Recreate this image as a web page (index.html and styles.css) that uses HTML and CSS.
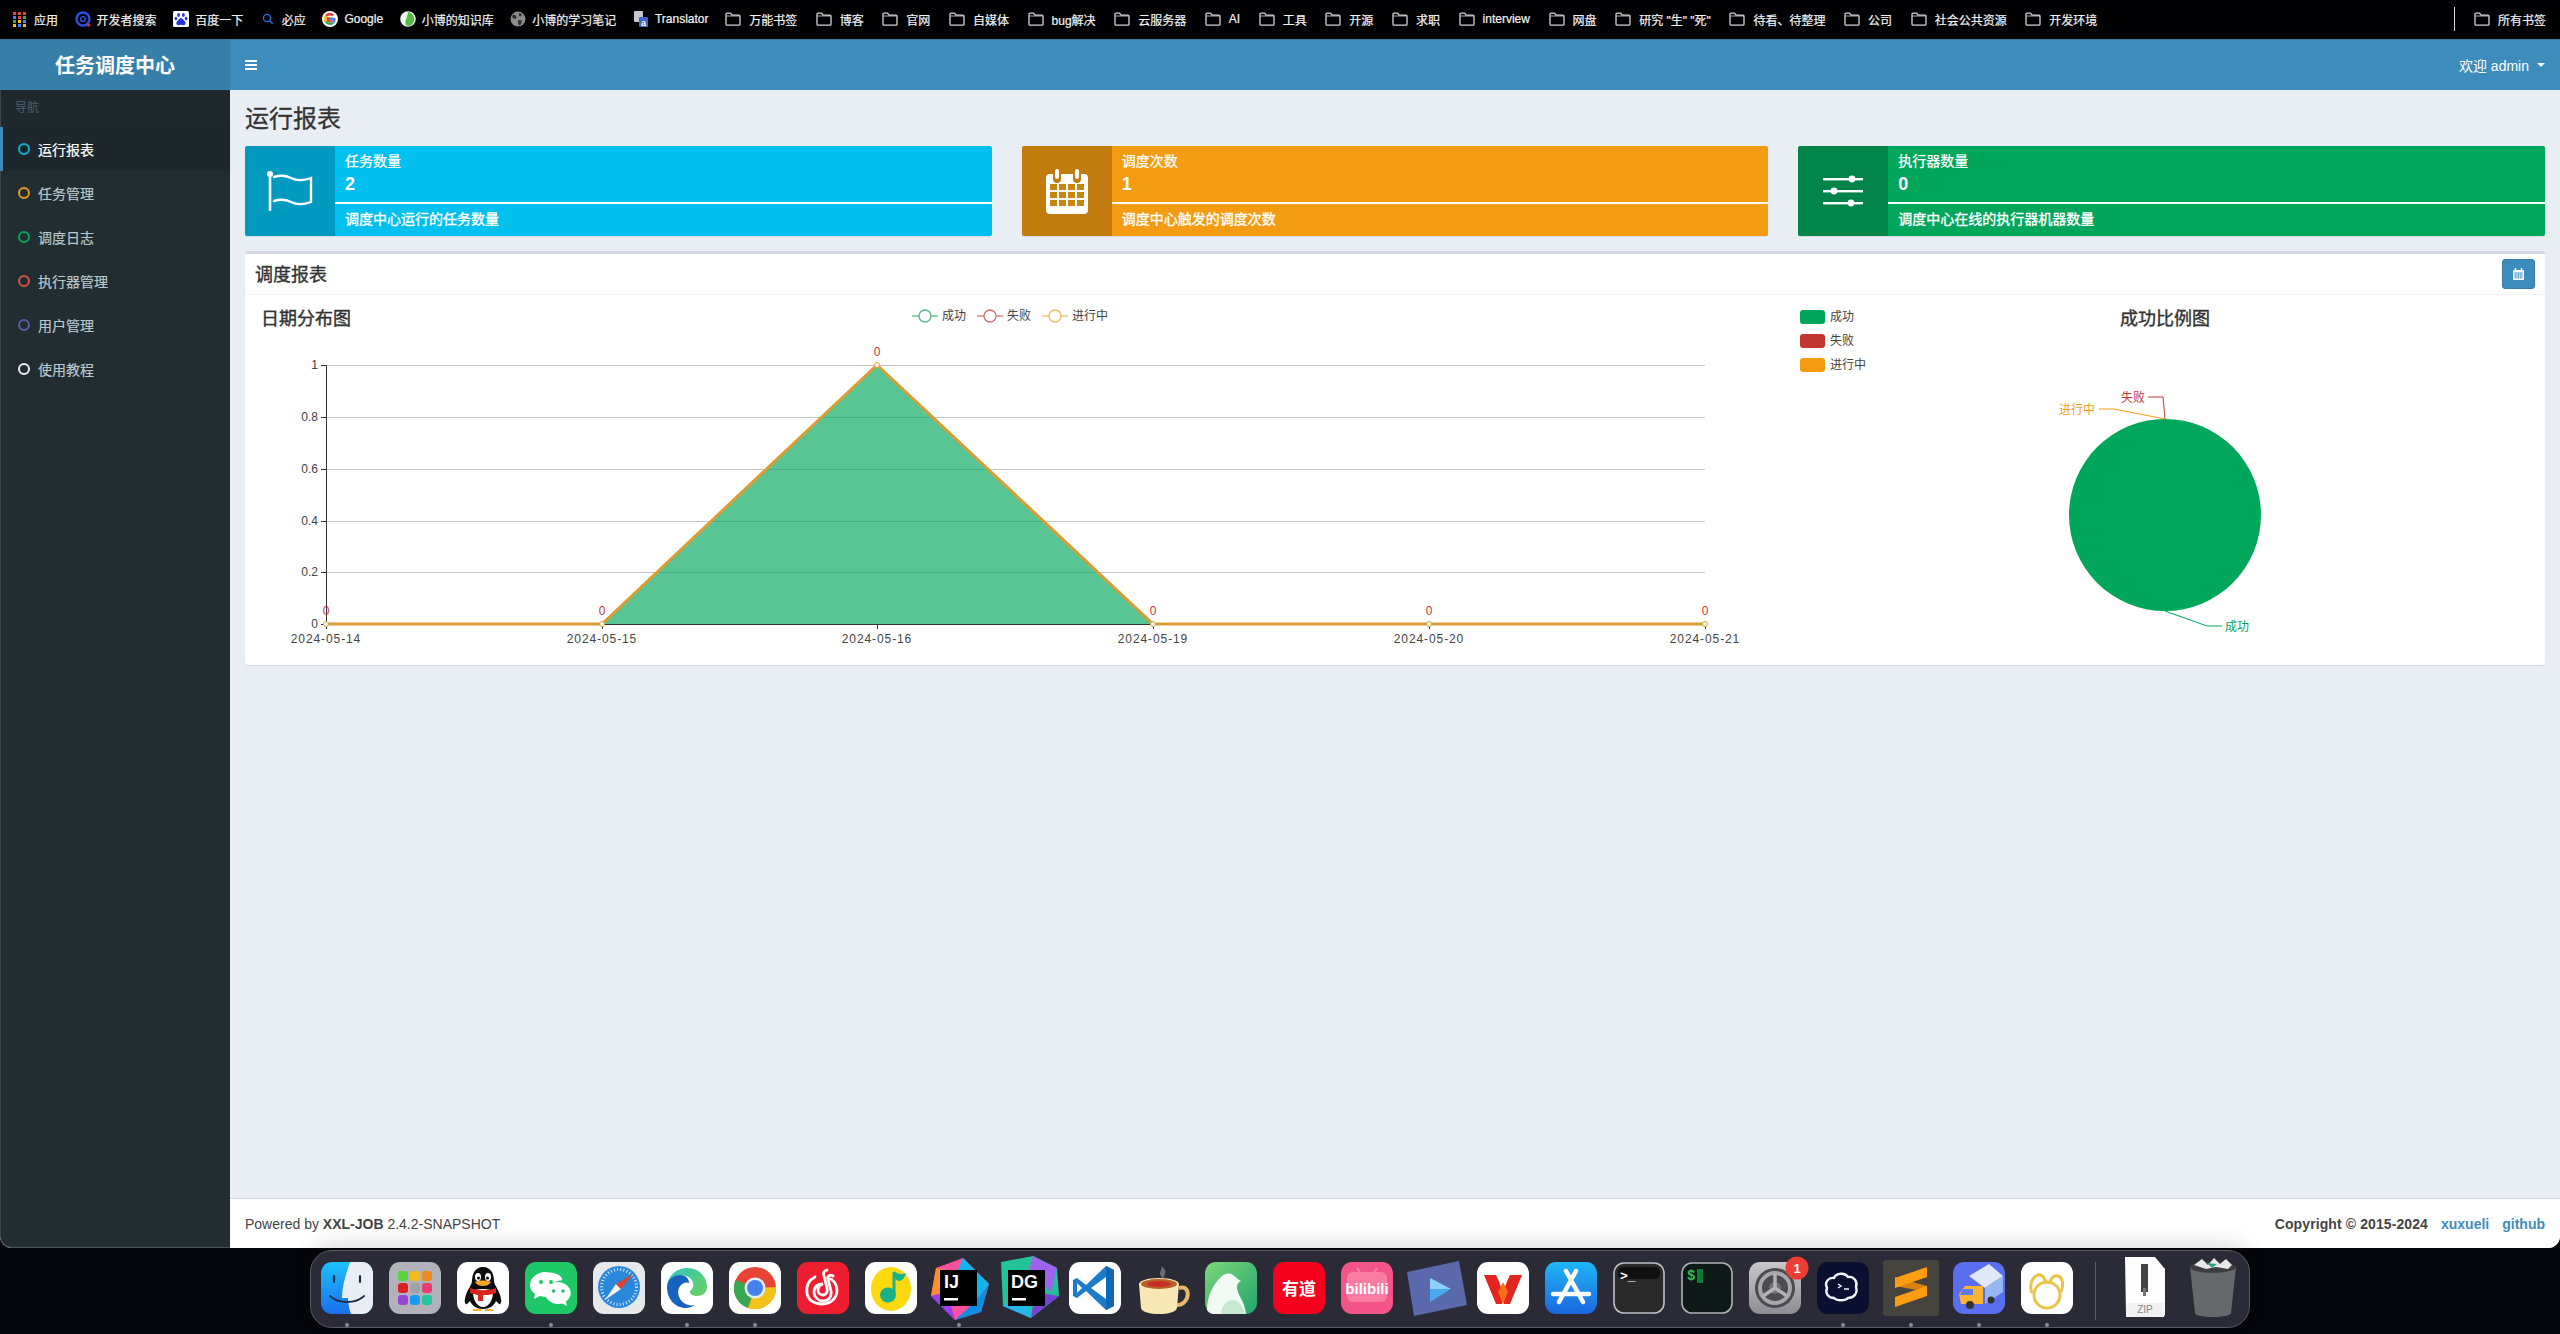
FILE: index.html
```html
<!DOCTYPE html>
<html lang="zh-CN">
<head>
<meta charset="utf-8">
<title>任务调度中心</title>
<link rel="stylesheet" href="styles.css">
</head>
<body>
<svg class="defs" width="0" height="0">
  <symbol id="folder" viewBox="0 0 16 16"><path d="M1 3.2a1 1 0 0 1 1-1h3.6l1.4 2h7a1 1 0 0 1 1 1v8a1 1 0 0 1-1 1H2a1 1 0 0 1-1-1z" fill="none" stroke="#d4d4d4" stroke-width="1.3"/><path d="M1 5h14" stroke="#d4d4d4" stroke-width=".8"/></symbol>
</svg>

<nav class="bookmarks">
  <a class="bm bm-site"><svg class="fav" viewBox="0 0 16 16"><g><rect x="1" y="1" width="3" height="3" fill="#e8453c"/><rect x="6" y="1" width="3" height="3" fill="#e8453c"/><rect x="11" y="1" width="3" height="3" fill="#e8453c"/><rect x="1" y="5" width="3" height="3" fill="#4285f4"/><rect x="6" y="5" width="3" height="3" fill="#ea4335"/><rect x="11" y="5" width="3" height="3" fill="#34a853"/><rect x="1" y="9" width="3" height="3" fill="#34a853"/><rect x="6" y="9" width="3" height="3" fill="#fbbc05"/><rect x="11" y="9" width="3" height="3" fill="#4285f4"/><rect x="1" y="13" width="3" height="3" fill="#fbbc05"/><rect x="6" y="13" width="3" height="3" fill="#4285f4"/><rect x="11" y="13" width="3" height="3" fill="#fbbc05"/></g></svg>应用</a>
  <a class="bm bm-site"><svg class="fav" viewBox="0 0 16 16"><circle cx="8" cy="8" r="6.5" fill="none" stroke="#2b4fe0" stroke-width="2.4"/><circle cx="8" cy="8" r="2.4" fill="none" stroke="#2b4fe0" stroke-width="1.4"/><circle cx="13.5" cy="14" r="1.8" fill="#f0201c"/></svg>开发者搜索</a>
  <a class="bm bm-site"><svg class="fav" viewBox="0 0 16 16"><rect width="16" height="16" rx="1.5" fill="#fff"/><g fill="#2932e1"><ellipse cx="5.6" cy="4" rx="1.4" ry="2"/><ellipse cx="10.4" cy="4" rx="1.4" ry="2"/><ellipse cx="2.9" cy="7.6" rx="1.3" ry="1.8"/><ellipse cx="13.1" cy="7.6" rx="1.3" ry="1.8"/><path d="M8 7c-2 0-2.600 2.500-4 3.600-1.200 1-.6 3.600 1.500 3.600 1 0 1.600-.4 2.500-.4s1.500.4 2.500.4c2.100 0 2.700-2.600 1.500-3.600C10.600 9.500 10 7 8 7z"/></g></svg>百度一下</a>
  <a class="bm bm-site"><svg class="fav" viewBox="0 0 16 16"><circle cx="7" cy="7" r="3.600" fill="none" stroke="#2a6fdb" stroke-width="1.400"/><path d="M9.700 9.700l3 3" stroke="#2a6fdb" stroke-width="1.400"/></svg>必应</a>
  <a class="bm bm-site"><svg class="fav" viewBox="0 0 16 16"><circle cx="8" cy="8" r="8" fill="#fff"/><path d="M13.300 6.800H8v2.500h3.100c-.3 1.400-1.500 2.300-3.100 2.300a3.600 3.600 0 0 1 0-7.200c.9 0 1.700.3 2.300.9l1.800-1.800A6.100 6.100 0 0 0 3 4.300l2 1.600" fill="#ea4335"/><path d="M3 4.300a6 6 0 0 0-.1 7l2.100-1.600a3.600 3.600 0 0 1 0-3.800z" fill="#fbbc05"/><path d="M2.900 11.300A6.100 6.100 0 0 0 8 14.100c1.600 0 3-.5 4.100-1.500l-2-1.600c-.6.400-1.300.6-2.100.6-1.400 0-2.500-.7-3-1.900z" fill="#34a853"/><path d="M12.100 12.600c1.200-1.100 1.900-2.800 1.200-5.800H8v2.500h3.100c-.2.700-.5 1.300-1 1.700z" fill="#4285f4"/></svg>Google</a>
  <a class="bm bm-site"><svg class="fav" viewBox="0 0 16 16"><circle cx="8" cy="8" r="7.800" fill="#f2f6ef"/><path d="M8 1c5 1 7 5 6 9-1 3-3 5-6 5-3-1-3-3-2-6 .5-3 2-5 2-8z" fill="#57b947"/></svg>小博的知识库</a>
  <a class="bm bm-site"><svg class="fav" viewBox="0 0 16 16"><circle cx="8" cy="8" r="7.500" fill="#8c8c8c"/><path d="M3 3.500l3 1 .5 2.500-2 1-2.500-2zM9 2l3 1-1 2.500-2-.5zM8 9l4 .5-1 4-2 1-1-3z" fill="#303030"/></svg>小博的学习笔记</a>
  <a class="bm bm-site"><svg class="fav" viewBox="0 0 16 16"><rect x="1" y="0" width="9" height="11" rx="1" fill="#c4c8d0"/><rect x="6" y="6" width="9" height="10" rx="1" fill="#3f66c9"/><text class="fav-letter" x="8" y="14.500">a</text></svg>Translator</a>
  <a class="bm"><svg class="fav"><use href="#folder"/></svg>万能书签</a>
  <a class="bm"><svg class="fav"><use href="#folder"/></svg>博客</a>
  <a class="bm"><svg class="fav"><use href="#folder"/></svg>官网</a>
  <a class="bm"><svg class="fav"><use href="#folder"/></svg>自媒体</a>
  <a class="bm"><svg class="fav"><use href="#folder"/></svg>bug解决</a>
  <a class="bm"><svg class="fav"><use href="#folder"/></svg>云服务器</a>
  <a class="bm"><svg class="fav"><use href="#folder"/></svg>AI</a>
  <a class="bm"><svg class="fav"><use href="#folder"/></svg>工具</a>
  <a class="bm"><svg class="fav"><use href="#folder"/></svg>开源</a>
  <a class="bm"><svg class="fav"><use href="#folder"/></svg>求职</a>
  <a class="bm"><svg class="fav"><use href="#folder"/></svg>interview</a>
  <a class="bm"><svg class="fav"><use href="#folder"/></svg>网盘</a>
  <a class="bm"><svg class="fav"><use href="#folder"/></svg>研究 "生" "死"</a>
  <a class="bm"><svg class="fav"><use href="#folder"/></svg>待看、待整理</a>
  <a class="bm"><svg class="fav"><use href="#folder"/></svg>公司</a>
  <a class="bm"><svg class="fav"><use href="#folder"/></svg>社会公共资源</a>
  <a class="bm"><svg class="fav"><use href="#folder"/></svg>开发环境</a>
  <span class="bm-sep"></span>
  <a class="bm"><svg class="fav"><use href="#folder"/></svg>所有书签</a>
</nav>

<div class="window">
  <aside class="side">
    <div class="logo">任务调度中心</div>
    <div class="side-head">导航</div>
    <ul class="menu">
      <li class="menu-item active"><i class="ring ring-aqua"></i>运行报表</li>
      <li class="menu-item"><i class="ring ring-yellow"></i>任务管理</li>
      <li class="menu-item"><i class="ring ring-green"></i>调度日志</li>
      <li class="menu-item"><i class="ring ring-red"></i>执行器管理</li>
      <li class="menu-item"><i class="ring ring-purple"></i>用户管理</li>
      <li class="menu-item"><i class="ring ring-white"></i>使用教程</li>
    </ul>
  </aside>
  <div class="main">
    <header class="topbar">
      <span class="burger"><i></i><i></i><i></i></span>
      <span class="user">欢迎 admin<i class="caret"></i></span>
    </header>
    <main class="content">
      <h1 class="page-title">运行报表</h1>
      <section class="cards">
        <article class="card card-aqua">
          <div class="card-icon"><svg width="46" height="40" viewBox="0 0 46 40"><g fill="none" stroke="#fff" stroke-linecap="round"><path d="M3 3v36" stroke-width="2.600"/><path d="M7 6c6-2 11-2 17 1s12 3 20 0v24c-8 3-14 3-20 0s-11-3-17-1" stroke-width="2.400"/></g><circle cx="3" cy="3" r="3" fill="#fff"/></svg></div>
          <div class="card-body">
            <div class="card-label">任务数量</div>
            <div class="card-num">2</div>
            <div class="card-rule"></div>
            <div class="card-desc">调度中心运行的任务数量</div>
          </div>
        </article>
        <article class="card card-yellow">
          <div class="card-icon"><svg width="42" height="46" viewBox="0 0 42 46"><path d="M4 6h3v5a4 4 0 0 0 8 0V6h12v5a4 4 0 0 0 8 0V6h3a4 4 0 0 1 4 4v32a4 4 0 0 1-4 4H4a4 4 0 0 1-4-4V10a4 4 0 0 1 4-4z" fill="#fff"/><path d="M9 9V3a2 2 0 0 1 4 0v6a2 2 0 0 1-4 0zM29 9V3a2 2 0 0 1 4 0v6a2 2 0 0 1-4 0z" fill="#fff"/><g fill="#c8850f"><rect x="4" y="16" width="7" height="6"/><rect x="13" y="16" width="7" height="6"/><rect x="22" y="16" width="7" height="6"/><rect x="31" y="16" width="7" height="6"/><rect x="4" y="24" width="7" height="6"/><rect x="13" y="24" width="7" height="6"/><rect x="22" y="24" width="7" height="6"/><rect x="31" y="24" width="7" height="6"/><rect x="4" y="32" width="7" height="6"/><rect x="13" y="32" width="7" height="6"/><rect x="22" y="32" width="7" height="6"/><rect x="31" y="32" width="7" height="6"/></g></svg></div>
          <div class="card-body">
            <div class="card-label">调度次数</div>
            <div class="card-num">1</div>
            <div class="card-rule"></div>
            <div class="card-desc">调度中心触发的调度次数</div>
          </div>
        </article>
        <article class="card card-green">
          <div class="card-icon"><svg width="40" height="32" viewBox="0 0 40 32"><g fill="#fff"><rect y="3" width="40" height="2.400"/><rect y="15" width="40" height="2.400"/><rect y="27" width="40" height="2.400"/><circle cx="29" cy="4" r="3.400"/><circle cx="11" cy="16" r="3.400"/><circle cx="28" cy="28" r="3.400"/></g></svg></div>
          <div class="card-body">
            <div class="card-label">执行器数量</div>
            <div class="card-num">0</div>
            <div class="card-rule"></div>
            <div class="card-desc">调度中心在线的执行器机器数量</div>
          </div>
        </article>
      </section>
      <section class="box">
        <div class="box-head">
          <h2 class="box-title">调度报表</h2>
          <button class="cal-btn"><svg width="11" height="12" viewBox="0 0 11 12"><path d="M1 2h9a1 1 0 0 1 1 1v8a1 1 0 0 1-1 1H1a1 1 0 0 1-1-1V3a1 1 0 0 1 1-1z" fill="#fff"/><path d="M2.500 0v2M8.500 0v2" stroke="#fff" stroke-width="1.500"/><path d="M1 5h9M1 7h9M1 9h9M3 4.500V11M5.500 4.500V11M8 4.500V11" stroke="#3c8dbc" stroke-width=".7"/></svg></button>
        </div>
        <div class="box-body">
          <svg class="chart chart-line" viewBox="245 295 1545 370" width="1545" height="370">
            <text class="c-title" x="261" y="325">日期分布图</text>
            <g class="legend-line">
              <path d="M912 316h26" stroke="#4fbb8c"/><circle cx="925" cy="316" r="6" fill="#fff" stroke="#4fbb8c"/>
              <path d="M977 316h26" stroke="#d3706d"/><circle cx="990" cy="316" r="6" fill="#fff" stroke="#d3706d"/>
              <path d="M1042 316h26" stroke="#f0bb60"/><circle cx="1055" cy="316" r="6" fill="#fff" stroke="#f0bb60"/>
            </g>
            <text class="c-small" x="942" y="320">成功</text>
            <text class="c-small" x="1007" y="320">失败</text>
            <text class="c-small" x="1072" y="320">进行中</text>
            <g class="grid-lines">
              <path d="M326 365.500H1705M326 417.500H1705M326 469.500H1705M326 521.500H1705M326 572.500H1705"/>
            </g>
            <polygon class="area" points="602,624 877,365 1153,624"/>
            <path class="axis" d="M326.500 365V624.500H1705M321 365.500h5M321 417.500h5M321 469.500h5M321 521.500h5M321 572.500h5M321 624.500h5M326.500 624v5M602.500 624v5M877.500 624v5M1153.500 624v5M1429.500 624v5M1705.500 624v5"/>
            <path class="series" d="M326 624L602 624L877 365L1153 624L1705 624"/>
            <g class="dots">
              <circle cx="326" cy="624" r="2.500"/><circle cx="602" cy="624" r="2.500"/><circle cx="877" cy="365" r="2.500"/><circle cx="1153" cy="624" r="2.500"/><circle cx="1429" cy="624" r="2.500"/><circle cx="1705" cy="624" r="2.500"/>
            </g>
            <g class="y-labels">
              <text x="318" y="369">1</text><text x="318" y="421">0.8</text><text x="318" y="473">0.6</text><text x="318" y="525">0.4</text><text x="318" y="576">0.2</text><text x="318" y="628">0</text>
            </g>
            <g class="x-labels">
              <text x="326" y="643">2024-05-14</text><text x="602" y="643">2024-05-15</text><text x="877" y="643">2024-05-16</text><text x="1153" y="643">2024-05-19</text><text x="1429" y="643">2024-05-20</text><text x="1705" y="643">2024-05-21</text>
            </g>
            <g class="v-labels">
              <text x="326" y="615">0</text><text x="602" y="615">0</text><text x="877" y="356">0</text><text x="1153" y="615">0</text><text x="1429" y="615">0</text><text x="1705" y="615">0</text>
            </g>
          </svg>
          <svg class="chart chart-pie" viewBox="1790 295 755 370" width="755" height="370">
            <rect x="1800" y="310" width="25" height="14" rx="3" fill="#00a65a"/>
            <rect x="1800" y="334" width="25" height="14" rx="3" fill="#c23632"/>
            <rect x="1800" y="358" width="25" height="14" rx="3" fill="#f39c12"/>
            <text class="c-small" x="1830" y="321">成功</text>
            <text class="c-small" x="1830" y="345">失败</text>
            <text class="c-small" x="1830" y="369">进行中</text>
            <text class="c-title c-center" x="2165" y="325">成功比例图</text>
            <circle cx="2165" cy="515" r="96" fill="#00a65a"/>
            <path class="lead" d="M2165 419L2163 397H2148" stroke="#c23632"/>
            <path class="lead" d="M2165 419L2114 409H2099" stroke="#f39c12"/>
            <path class="lead" d="M2165 611L2207 626H2222" stroke="#00a65a"/>
            <text class="c-small t-red" x="2121" y="402">失败</text>
            <text class="c-small t-orange" x="2059" y="414">进行中</text>
            <text class="c-small t-green" x="2225" y="631">成功</text>
          </svg>
        </div>
      </section>
    </main>
    <footer class="foot">
      <span>Powered by <b>XXL-JOB</b> 2.4.2-SNAPSHOT</span>
      <span class="foot-r"><b>Copyright © 2015-2024</b><a class="foot-link">xuxueli</a><a class="foot-link">github</a></span>
    </footer>
  </div>
</div>

<div class="dock">
  <div class="app on"><svg viewBox="0 0 52 52"><defs><linearGradient id="fb" x1="0" y1="0" x2="0" y2="1"><stop offset="0" stop-color="#1cc0fb"/><stop offset="1" stop-color="#1c6fee"/></linearGradient></defs><rect width="52" height="52" rx="11" fill="url(#fb)"/><path d="M29 0h12a11 11 0 0 1 11 11v30a11 11 0 0 1-11 11H30c-2-6-3-11-3-16h-6c0-12 4-24 8-36z" fill="#e9eef4"/><path d="M13 14v6M39 14v6" stroke="#20304a" stroke-width="2.200" stroke-linecap="round"/><path d="M9 34c8 8 26 8 34 0" fill="none" stroke="#20304a" stroke-width="1.800" stroke-linecap="round"/></svg></div>
  <div class="app"><svg viewBox="0 0 52 52"><rect width="52" height="52" rx="11" fill="#b2b2ba"/><g><rect x="9" y="9" width="10" height="10" rx="3" fill="#5fd13f"/><rect x="21" y="9" width="10" height="10" rx="3" fill="#f6bb14"/><rect x="33" y="9" width="10" height="10" rx="3" fill="#ee8a1e"/><rect x="9" y="21" width="10" height="10" rx="3" fill="#dd1f22"/><rect x="21" y="21" width="10" height="10" rx="3" fill="#9ea3a7"/><rect x="33" y="21" width="10" height="10" rx="3" fill="#ea3e73"/><rect x="9" y="33" width="10" height="10" rx="3" fill="#9a45d6"/><rect x="21" y="33" width="10" height="10" rx="3" fill="#1a9af0"/><rect x="33" y="33" width="10" height="10" rx="3" fill="#25c49a"/></g></svg></div>
  <div class="app"><svg viewBox="0 0 52 52"><rect width="52" height="52" rx="11" fill="#fff"/><path d="M26 5c-8 0-11 7-11 14 0 4-6 10-7 18-1 4 1 6 2 5l3-3c2 5 7 8 13 8s11-3 13-8l3 3c1 1 3-1 2-5-1-8-7-14-7-18 0-7-3-14-11-14z" fill="#0d0d0d"/><path d="M16 30c0 8 4 15 10 15s10-7 10-15c0-4-20-4-20 0z" fill="#fff"/><ellipse cx="21" cy="15" rx="3" ry="4" fill="#fff"/><ellipse cx="31" cy="15" rx="3" ry="4" fill="#fff"/><circle cx="21.500" cy="16" r="1.500"/><circle cx="30.500" cy="16" r="1.500"/><path d="M18 20c4-2 12-2 16 0-2 3-5 4-8 4s-6-1-8-4z" fill="#f5a623"/><path d="M13 26c8 3 18 3 26 0v5c-6 2-8 2-12 2l-1 1v5h-5v-6c-3-1-6-1-8-2z" fill="#d9231f"/><path d="M17 47h7v2h-9zM28 47h7l2 2h-9z" fill="#f5b31e"/></svg></div>
  <div class="app on"><svg viewBox="0 0 52 52"><rect width="52" height="52" rx="11" fill="#1ec866"/><path d="M21 10C12 10 5 16 5 23c0 4 2 7 5 9l-1 5 6-3c2 .5 4 1 6 1 1 0 2 0 3-.3-.5-1.500-.7-3-.7-4.500 0-7 6-12 14-12 0-5-7-8-16-8z" fill="#fff"/><path d="M33 20c-7 0-13 5-13 11s6 11 13 11c1.500 0 3-.3 4-.6l5 2.600-1-4.500c3-2 4.800-5 4.800-8.500 0-6-6-11-12.800-11z" fill="#fff"/><circle cx="16" cy="20" r="2" fill="#1ec866"/><circle cx="26" cy="20" r="2" fill="#1ec866"/><circle cx="28.500" cy="29" r="1.800" fill="#1ec866"/><circle cx="38" cy="29" r="1.800" fill="#1ec866"/></svg></div>
  <div class="app"><svg viewBox="0 0 52 52"><rect width="52" height="52" rx="11" fill="#e7e8ea"/><circle cx="26" cy="25" r="21" fill="#2a88dc"/><circle cx="26" cy="25" r="17.500" fill="none" stroke="#d6ecfb" stroke-width="3" stroke-dasharray="1 2.200"/><path d="M12 38l11-16 5 5z" fill="#f4f4f4"/><path d="M40 12L23 22l5 5z" fill="#e2402f"/></svg></div>
  <div class="app on"><svg viewBox="0 0 52 52"><defs><linearGradient id="eg" x1="0" y1="0" x2="1" y2="1"><stop offset="0" stop-color="#2fc5c2"/><stop offset="1" stop-color="#6bd35b"/></linearGradient></defs><rect width="52" height="52" rx="11" fill="#fff"/><path d="M6 25C7 13 16 6 26 6c12 0 20 9 20 19 0 5-4 9-10 9-4 0-7-2-7-4 0-1 1-2 2-3 3-4 1-11-6-13C15 12 7 17 6 25z" fill="url(#eg)"/><path d="M6 25c0-8 7-12 13-12 6 0 9 4 9 8-2-1-5-1-8 2-5 5-3 14 3 18 3 2 7 3 11 2-3 2-6 3-9 3C14 46 6 37 6 25z" fill="#1763bf"/></svg></div>
  <div class="app on"><svg viewBox="0 0 52 52"><rect width="52" height="52" rx="11" fill="#fff"/><circle cx="26" cy="26" r="21" fill="#e84335"/><path d="M26 26L6.500 18A21 21 0 0 0 19 46z" fill="#38a853"/><path d="M26 26l21-1A21 21 0 0 1 19 46z" fill="#f5c21a"/><circle cx="26" cy="26" r="10.500" fill="#e7eefb"/><circle cx="26" cy="26" r="8" fill="#4381ee"/></svg></div>
  <div class="app"><svg viewBox="0 0 52 52"><rect width="52" height="52" rx="11" fill="#ee1d2f"/><path d="M30 8c-3 1-4 3-3 6l3 12c1 4-1 7-4 7s-5-2-5-5 2-5 5-6c-6 0-9 3-9 8 0 5 4 9 9 9 6 0 9-5 8-10l-3-12c-1-3 2-5 5-3" fill="none" stroke="#fff" stroke-width="2.800" stroke-linecap="round"/><path d="M18 15c-6 3-9 9-8 16 1 7 7 11 15 11 9 0 15-6 15-14 0-6-4-11-9-12" fill="none" stroke="#fff" stroke-width="2.800" stroke-linecap="round"/></svg></div>
  <div class="app"><svg viewBox="0 0 52 52"><rect width="52" height="52" rx="11" fill="#fff"/><ellipse cx="26" cy="27" rx="20" ry="22" fill="#fcd90f"/><path d="M29 10v22" stroke="#1ab188" stroke-width="3"/><ellipse cx="23" cy="33" rx="8" ry="7.500" fill="#1ab188"/><path d="M29 9c3 3 9 4 12 2-1 4-3 7-6 8-3 0-5-2-6-4z" fill="#1ab188"/></svg></div>
  <div class="app on"><svg viewBox="0 0 52 52"><polygon points="3,6 30,-4 56,22 48,50 22,58 -2,34" fill="#fc4f9e"/><polygon points="30,-4 56,22 42,40 24,10" fill="#13b4ee"/><polygon points="3,6 20,10 14,30 -2,34" fill="#fd8f2f"/><polygon points="42,40 56,22 48,50 22,58" fill="#0f8de0"/><polygon points="-2,34 14,30 22,58" fill="#9a3ff0"/><rect x="7" y="8" width="37" height="36" fill="#000"/><text class="ide-t" x="11" y="26">IJ</text><rect x="11" y="36" width="14" height="2.500" fill="#fff"/></svg></div>
  <div class="app"><svg viewBox="0 0 52 52"><polygon points="0,0 32,-6 56,6 58,34 30,56 2,44" fill="#22c29a"/><polygon points="32,-6 56,6 50,30 28,8" fill="#9e63ee"/><polygon points="2,44 30,56 24,30" fill="#25b6ee"/><polygon points="30,56 58,34 34,30" fill="#7a41d8"/><rect x="7" y="8" width="37" height="36" fill="#000"/><text class="ide-t" x="10" y="26">DG</text><rect x="11" y="36" width="14" height="2.500" fill="#fff"/></svg></div>
  <div class="app"><svg viewBox="0 0 52 52"><rect width="52" height="52" rx="11" fill="#fff"/><path d="M37 4l8 4v36l-8 4L17 29l-9 7-4-2V18l4-2 9 7z" fill="#1c7ccb"/><path d="M37 4l8 4v36l-8 4z" fill="#0f68b5"/><path d="M37 15v22L22 26z" fill="#fff"/><path d="M8 21v10l5-5z" fill="#fff"/></svg></div>
  <div class="app"><svg viewBox="0 0 52 52"><path d="M24 14c-3-4 2-6 0-10 4 2 6 6 3 10 0 0 0 2-1 3z" fill="#6b6b6b"/><path d="M2 22c0-3 8-6 20-6s20 3 20 6l-2 24c-1 4-9 6-18 6S5 50 4 46z" fill="#f8e6b4"/><ellipse cx="22" cy="22" rx="18" ry="5" fill="#b5622a"/><ellipse cx="22" cy="22" rx="12" ry="3" fill="#c92b26"/><path d="M42 26c8-2 10 4 8 10-2 5-6 7-10 7" fill="none" stroke="#e8b866" stroke-width="4"/></svg></div>
  <div class="app"><svg viewBox="0 0 52 52"><defs><linearGradient id="yq" x1="0" y1="0" x2="1" y2="1"><stop offset="0" stop-color="#7bd67a"/><stop offset="1" stop-color="#21a56b"/></linearGradient></defs><rect width="52" height="52" rx="11" fill="url(#yq)"/><path d="M2 48c0-14 6-25 13-32 3-4 9-6 13-3 3 2 4 4 8 6-3 2-4 3-4 6 0 8 8 14 9 27H8a8 8 0 0 1-6-4z" fill="#f2faf4"/><path d="M16 52c0-8 6-14 12-14 6 0 10 8 12 14z" fill="#c5e8d0"/></svg></div>
  <div class="app"><svg viewBox="0 0 52 52"><rect width="52" height="52" rx="11" fill="#f5001d"/><text class="yd-t" x="26" y="33">有道</text></svg></div>
  <div class="app"><svg viewBox="0 0 52 52"><rect width="52" height="52" rx="11" fill="#f3558b"/><path d="M19 10l-3-4M33 10l3-4" stroke="#fa86ac" stroke-width="2"/><rect x="6" y="10" width="40" height="30" rx="6" fill="#fa7ca3"/><text class="bili-t" x="26" y="32">bilibili</text></svg></div>
  <div class="app"><svg viewBox="0 0 52 52"><polygon points="-2,10 50,-1 58,43 5,54" fill="#5a69ac"/><polygon points="21,16 42,27 21,40" fill="#4aa8f0"/><polygon points="21,16 42,27 21,27" fill="#8dd0fa"/></svg></div>
  <div class="app"><svg viewBox="0 0 52 52"><rect width="52" height="52" rx="11" fill="#fff"/><path d="M7 13h13l6 18 6-18h13L33 42h-6l-1-3-1 3h-6z" fill="#e5231f"/><path d="M19 13h14l-7 15z" fill="#fff"/><path d="M21 30l5-10 5 10-5 12z" fill="#f8711a"/></svg></div>
  <div class="app"><svg viewBox="0 0 52 52"><defs><linearGradient id="as" x1="0" y1="0" x2="0" y2="1"><stop offset="0" stop-color="#1fb6f6"/><stop offset="1" stop-color="#1b66e0"/></linearGradient></defs><rect width="52" height="52" rx="11" fill="url(#as)"/><path d="M31 9L14 40M21 9l17 31M8 32h36" stroke="#fff" stroke-width="4.500" stroke-linecap="round" fill="none"/></svg></div>
  <div class="app"><svg viewBox="0 0 52 52"><rect x="1" y="1" width="50" height="50" rx="10" fill="#2a2a2a" stroke="#bfbfc5" stroke-width="1.600"/><rect x="5" y="5" width="42" height="12" rx="5" fill="#101010"/><text class="term-t" x="7" y="18">&gt;_</text></svg></div>
  <div class="app"><svg viewBox="0 0 52 52"><rect x="1" y="1" width="50" height="50" rx="10" fill="#0f1a18" stroke="#aeb4b6" stroke-width="1.600"/><text class="iterm-t" x="6" y="18">$</text><rect x="16" y="7" width="6" height="14" fill="#0f7a36"/></svg></div>
  <div class="app"><svg viewBox="0 0 52 52"><defs><linearGradient id="sg" x1="0" y1="0" x2="0" y2="1"><stop offset="0" stop-color="#c8c8cc"/><stop offset="1" stop-color="#8c8c92"/></linearGradient></defs><rect width="52" height="52" rx="11" fill="url(#sg)"/><circle cx="26" cy="26" r="20" fill="#4b4b50"/><circle cx="26" cy="26" r="15" fill="none" stroke="#a8a8ac" stroke-width="4"/><circle cx="26" cy="26" r="6" fill="#707075"/><path d="M26 12v14M26 26l-12 8M26 26l12 8" stroke="#b4b4b8" stroke-width="3.500"/><circle class="badge-dot" cx="48" cy="6" r="11.500"/><text class="badge-t" x="48" y="10.500">1</text></svg></div>
  <div class="app on"><svg viewBox="0 0 52 52"><rect width="52" height="52" rx="11" fill="#0b1030"/><path d="M17 36c-6 0-9-5-7-10-3-6 2-11 7-10 2-5 11-6 14-1 6-1 10 5 8 10 2 6-2 11-8 11-3 3-11 3-14 0z" fill="none" stroke="#f2f4fb" stroke-width="2.400"/><path d="M21 22l3 2-3 2M27 27h5" stroke="#f2f4fb" stroke-width="1.500" fill="none"/></svg></div>
  <div class="app on"><svg viewBox="0 0 52 52"><rect x="-2" y="-2" width="56" height="56" rx="3" fill="#45443e"/><polygon points="10,15 42,24 42,30 10,24" fill="#d8820a"/><polygon points="10,16 42,5 42,15 10,26" fill="#ff9d12"/><polygon points="42,24 42,34 10,45 10,35" fill="#ff9d12"/></svg></div>
  <div class="app on"><svg viewBox="0 0 52 52"><rect width="52" height="52" rx="11" fill="#5a6ff0"/><polygon points="16,14 36,2 50,14 32,26" fill="#dfe9fa"/><polygon points="32,26 50,14 50,30 32,42" fill="#98b6ef"/><polygon points="12,24 30,24 30,42 8,42 6,32" fill="#f8b432"/><polygon points="10,27 20,27 20,33 7,33" fill="#5d7ae8"/><circle cx="17" cy="43" r="4" fill="#333"/><circle cx="38" cy="38" r="3.500" fill="#333"/></svg></div>
  <div class="app on"><svg viewBox="0 0 52 52"><rect width="52" height="52" rx="11" fill="#fff"/><g fill="none" stroke="#e8c547" stroke-width="3"><circle cx="26" cy="33" r="13"/><path d="M11 31c-3-8 0-16 6-18 5-1 7 4 8 9"/><path d="M28 22c2-6 5-9 9-8 5 2 6 9 3 16"/></g></svg></div>
  <span class="dock-sep"></span>
  <div class="app app-zip"><svg viewBox="0 0 52 60"><path d="M6 0h30l10 12v46l-2 2H8l-1-2z" fill="#fdfdfd"/><rect x="7" y="46" width="38" height="14" fill="#f2f2f2"/><rect x="22" y="7" width="7" height="28" fill="#444"/><rect x="24" y="31" width="3" height="8" fill="#777"/><text class="zip-t" x="26" y="56">ZIP</text></svg></div>
  <div class="app app-trash"><svg viewBox="0 0 52 60"><path d="M3 10h46l-5 46c0 2-7 4-18 4s-18-2-18-4z" fill="#66686b"/><ellipse cx="26" cy="10" rx="23" ry="6" fill="#3c3d40"/><path d="M7 8l8-6 6 6 6-7 6 6 6-5 6 6-4 4-12-2-10 2z" fill="#e8e8e8"/><path d="M20 6l5 5 5-4z" fill="#30a080"/></svg></div>
</div>
</body>
</html>
```

FILE: styles.css
```css
* { box-sizing: border-box; }
html, body { margin: 0; padding: 0; }
body {
  width: 2560px;
  height: 1334px;
  overflow: hidden;
  display: flex;
  flex-direction: column;
  background: #05050c;
  font-family: "Liberation Sans", "Noto Sans CJK SC", sans-serif;
  color: #333;
}
.defs { position: absolute; }

/* bookmarks */
.bookmarks {
  height: 39px;
  flex: none;
  display: flex;
  align-items: center;
  gap: 18.600px;
  padding: 0 0 1px 12px;
  background: #010103;
  color: #f2f2f2;
  font: 12px "Liberation Sans", "Noto Sans CJK SC", sans-serif;
  -webkit-text-stroke: .2px #f2f2f2;
}
.bm { display: flex; align-items: center; white-space: nowrap; }
.fav { width: 16px; height: 16px; margin-right: 8px; flex: none; overflow: visible; }
.bm-site { margin-right: -2px; }
.bm-site .fav { margin-right: 6px; }
.fav-letter { font: bold 9px "Liberation Sans", sans-serif; fill: #fff; }
.bm-sep { width: 1px; height: 24px; background: #d8d8d8; margin-left: auto; }
.bm:last-child { margin-right: 14px; }

/* window */
.window {
  height: 1209px;
  flex: none;
  display: flex;
  border-radius: 0 0 12px 12px;
  overflow: hidden;
  background: #ecf0f5;
}
.side {
  width: 230px;
  flex: none;
  display: flex;
  flex-direction: column;
  background: #222d32;
  border-left: 1px solid #3b4347;
  border-bottom: 1px solid #4a5256;
  border-radius: 0 0 0 12px;
}
.logo {
  height: 51px;
  flex: none;
  margin-left: -1px;
  background: #367fa9;
  border-top: 1px solid #3f7396;
  color: #fff;
  font-size: 20px;
  font-weight: 700;
  line-height: 52px;
  text-align: center;
}
.side-head {
  height: 37px;
  padding: 7px 14px 0;
  background: #1f282d;
  color: #4b646f;
  font-size: 12px;
  line-height: 22px;
}
.menu { list-style: none; margin: 0; padding: 0; }
.menu-item {
  height: 44px;
  display: flex;
  align-items: center;
  padding-left: 17px;
  padding-bottom: 1px;
  color: #b8c7ce;
  font-size: 14px;
  border-left: 3px solid transparent;
  margin-left: -1px;
  -webkit-text-stroke: .2px;
}
.menu-item.active { background: #1e282c; color: #fff; border-left-color: #3c8dbc; }
.ring {
  width: 12px;
  height: 12px;
  margin-right: 8px;
  margin-left: -2px;
  border-radius: 50%;
  border: 2px solid currentColor;
}
.ring-aqua { color: #0fb1d8; }
.ring-yellow { color: #e8991f; }
.ring-green { color: #00a65a; }
.ring-red { color: #d9503f; }
.ring-purple { color: #5a5aa8; }
.ring-white { color: #e8ecee; }

.main { flex: 1; display: flex; flex-direction: column; min-width: 0; }
.topbar {
  height: 51px;
  flex: none;
  display: flex;
  align-items: center;
  justify-content: space-between;
  padding: 0 15px;
  background: #3c8dbc;
  border-top: 1px solid #3f7ba0;
  color: #fff;
}
.burger { display: flex; flex-direction: column; gap: 2px; }
.burger i { display: block; width: 12px; height: 2px; background: #fff; }
.user { display: flex; align-items: center; font-size: 14px; }
.caret {
  margin-left: 8px;
  border-top: 4px solid #fff;
  border-left: 4px solid transparent;
  border-right: 4px solid transparent;
}

.content { flex: 1; padding: 0 15px; background: #e9eef5; }
.page-title {
  margin: 0;
  height: 56px;
  font-size: 24px;
  font-weight: 400;
  line-height: 57px;
  color: #333;
  -webkit-text-stroke: .3px #333;
}
.cards { display: grid; grid-template-columns: repeat(3, 1fr); gap: 30px; }
.card {
  height: 90px;
  display: flex;
  border-radius: 2px;
  overflow: hidden;
  color: #fff;
  box-shadow: 0 1px 1px rgba(0, 0, 0, .08);
}
.card-aqua { background: #00c0ef; }
.card-yellow { background: #f39c12; }
.card-green { background: #00a65a; }
.card-icon {
  width: 90px;
  flex: none;
  display: flex;
  align-items: center;
  justify-content: center;
  background: rgba(0, 0, 0, .2);
}
.card-body { flex: 1; display: flex; flex-direction: column; }
.card-label { height: 25px; padding: 6px 10px 0; font-size: 14px; line-height: 18px; -webkit-text-stroke: .25px #fff; }
.card-num { height: 31px; padding: 0 10px; font-size: 18px; font-weight: 700; line-height: 26px; }
.card-rule { height: 2px; background: #fff; flex: none; }
.card-desc { padding: 5px 10px 0; font-size: 14px; line-height: 20px; -webkit-text-stroke: .35px #fff; }

.box {
  margin-top: 15px;
  height: 414px;
  background: #fff;
  border-top: 3px solid #d2d6de;
  border-radius: 3px;
  box-shadow: 0 1px 1px rgba(0, 0, 0, .1);
}
.box-head {
  height: 41px;
  display: flex;
  align-items: center;
  justify-content: space-between;
  padding: 0 10px;
  border-bottom: 1px solid #f4f4f4;
}
.box-title { margin: -3px 0 0; font-size: 18px; font-weight: 400; color: #333; -webkit-text-stroke: .35px #333; }
.cal-btn {
  width: 33px;
  height: 30px;
  padding: 0;
  display: flex;
  align-items: center;
  justify-content: center;
  background: #3c8dbc;
  border: 1px solid #367fa9;
  border-radius: 3px;
}
.box-body { display: flex; }
.chart { display: block; flex: none; font-family: "Liberation Sans", "Noto Sans CJK SC", sans-serif; }
.c-title { font-size: 18px; font-weight: 400; fill: #333; stroke: #333; stroke-width: .4px; }
.c-center { text-anchor: middle; }
.c-small { font-size: 12px; fill: #444; }
.t-red { fill: #c23632; }
.t-orange { fill: #f39c12; }
.t-green { fill: #00a65a; }
.legend-line { fill: none; stroke-width: 1.300; }
.grid-lines { stroke: #c6c6c6; stroke-width: 1; fill: none; }
.area { fill: #00a65a; fill-opacity: .65; }
.axis { fill: none; stroke: #333; stroke-width: 1; }
.series { fill: none; stroke: #dc9c34; stroke-width: 3; stroke-linejoin: round; }
.dots circle { fill: #fff; stroke: #e0a33c; stroke-width: 1; }
.y-labels text { font-size: 12px; fill: #444; text-anchor: end; }
.x-labels text { font-size: 12px; letter-spacing: .9px; fill: #444; text-anchor: middle; }
.v-labels text { font-size: 12px; fill: #c23632; text-anchor: middle; }
.lead { fill: none; stroke-width: 1; }

.foot {
  height: 50px;
  flex: none;
  display: flex;
  align-items: center;
  justify-content: space-between;
  padding: 0 15px;
  background: #fff;
  border-top: 1px solid #d2d6de;
  color: #444;
  font-size: 14px;
}
.foot-r { display: flex; gap: 13px; }
.foot-r b { letter-spacing: .1px; }
.foot-link { color: #3c8dbc; font-weight: 700; }

/* dock */
.dock {
  position: relative;
  z-index: 1;
  width: 1940px;
  height: 78px;
  flex: none;
  margin: 2px auto 0;
  padding: 11px 0 0 10px;
  display: flex;
  align-items: flex-start;
  gap: 16px;
  background: #2b2b37;
  border: 1px solid #5a5a64;
  border-radius: 22px;
  box-shadow: 0 -6px 22px rgba(0, 0, 0, .14);
}
.app { position: relative; width: 52px; height: 52px; flex: none; }
.app svg { display: block; width: 52px; height: 52px; overflow: visible; }
.app.on::after {
  content: "";
  position: absolute;
  left: 24px;
  bottom: -13px;
  width: 4px;
  height: 4px;
  border-radius: 50%;
  background: #8e8e96;
}
.app-zip svg, .app-trash svg { height: 60px; margin-top: -5px; }
.dock-sep { width: 1px; height: 58px; margin: 0 7px 0 6px; background: #5c5c66; flex: none; }
.ide-t { font: 700 18px "Liberation Sans", sans-serif; fill: #fff; }
.yd-t { font: 700 17px "Noto Sans CJK SC", sans-serif; fill: #fff; text-anchor: middle; }
.bili-t { font: 700 15px "Liberation Sans", sans-serif; fill: #fff; text-anchor: middle; }
.term-t { font: 700 13px "Liberation Mono", monospace; fill: #fff; }
.iterm-t { font: 700 14px "Liberation Mono", monospace; fill: #29c24c; }
.badge-dot { fill: #ee3c37; }
.badge-t { font: 700 13px "Liberation Sans", sans-serif; fill: #fff; text-anchor: middle; }
.zip-t { font: 10px "Liberation Sans", sans-serif; fill: #888; text-anchor: middle; }
```
